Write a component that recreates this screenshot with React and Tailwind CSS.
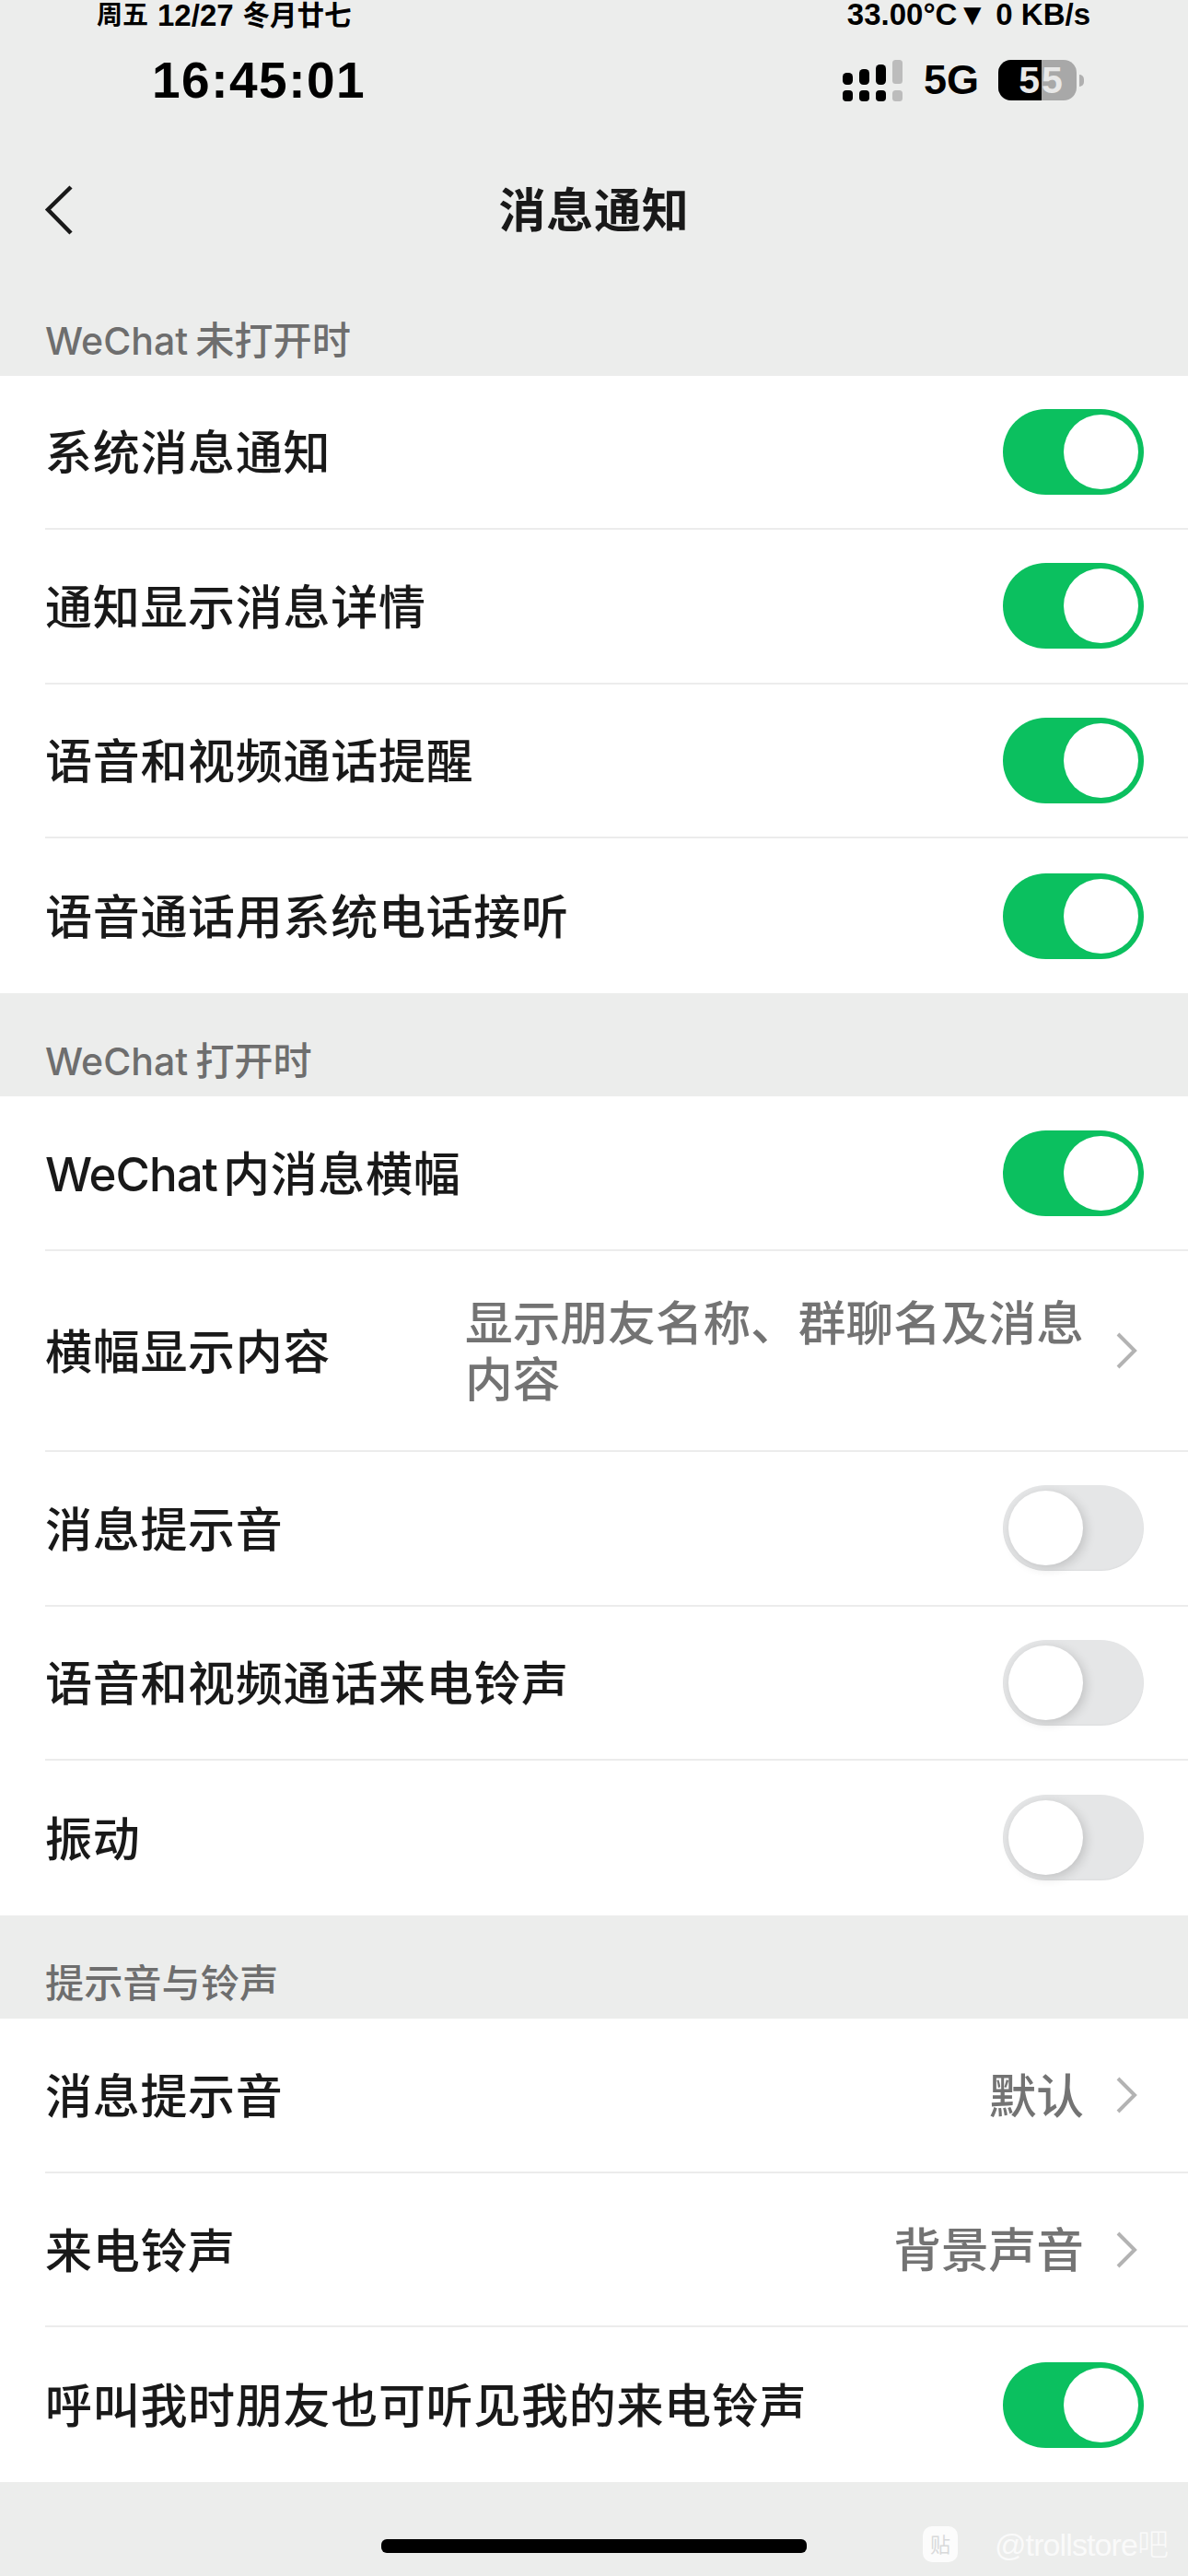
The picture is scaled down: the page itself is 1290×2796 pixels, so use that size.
function Toggle({ on }) {
  if (on) {
    return (
      <div className="flex h-[93px] w-[153px] shrink-0 items-center justify-end rounded-full bg-[#0bc05f] pr-[6px]">
        <div className="h-[81px] w-[81px] rounded-full bg-white" />
      </div>
    );
  }
  return (
    <div className="flex h-[93px] w-[153px] shrink-0 items-center rounded-full bg-[#e5e6e7] pl-[6px] shadow-[inset_0_-1px_2px_rgba(0,0,0,0.04)]">
      <div className="h-[81px] w-[81px] rounded-full bg-white shadow-[3px_3px_12px_rgba(0,0,0,0.16)]" />
    </div>
  );
}

function Chevron() {
  return (
    <svg width="24" height="40" viewBox="0 0 24 40" className="shrink-0" fill="none">
      <path d="M3 2 L21 20 L3 38" stroke="#b3b3b3" strokeWidth="4" />
    </svg>
  );
}

function Row({ label, latin, on, value, last, tall }) {
  return (
    <div className={tall ? "flex h-[218px] pl-[49px]" : "flex h-[167.6px] pl-[49px]"}>
      <div className={last ? "flex min-w-0 flex-1 items-center pr-[48px]" : "flex min-w-0 flex-1 items-center border-b-2 border-[#ececec] pr-[48px]"}>
        <span className="shrink-0 pt-[3px] text-[51px] font-medium leading-none tracking-[0.7px] text-[#191919]">
          {latin ? <span className="mr-[6px] tracking-[-1px]">{latin}</span> : null}
          {label}
        </span>
        <div className="flex-1" />
        {value ? (
          <div className="flex items-center pr-[7px]">
            <span className={tall ? "w-[680px] pt-[2px] text-[51.7px] leading-[61px] font-medium text-[#737373]" : "pt-[3px] text-[51.7px] leading-none font-medium text-[#737373]"}>{value}</span>
            <div className={tall ? "ml-[26px]" : "ml-[34px]"}><Chevron /></div>
          </div>
        ) : (
          <Toggle on={on} />
        )}
      </div>
    </div>
  );
}

function SectionHeader({ latin, children }) {
  return (
    <div className="flex h-[112.5px] items-end pb-[15px] pl-[49px] text-[42.2px] font-medium leading-[46px] text-[#6e6e6e]">
      {latin ? <span className="mr-[8px] text-[41px]">{latin}</span> : null}
      <span>{children}</span>
    </div>
  );
}

function Signal() {
  return (
    <svg width="65" height="45" viewBox="0 0 65 45" fill="none">
      <g fill="#000">
        <rect x="0" y="14" width="11" height="13" rx="4.5" />
        <rect x="18" y="10" width="11" height="17" rx="4.5" />
        <rect x="36" y="5" width="11" height="22" rx="4.5" />
        <rect x="0" y="33" width="11" height="12" rx="4" />
        <rect x="18" y="33" width="11" height="12" rx="4" />
        <rect x="36" y="33" width="11" height="12" rx="4" />
      </g>
      <rect x="54" y="0" width="11" height="26" rx="3.5" fill="#bcbcbc" />
      <rect x="54" y="33" width="11" height="12" rx="3.5" fill="#bcbcbc" />
    </svg>
  );
}

function Battery() {
  return (
    <div className="flex items-center">
      <div className="relative flex h-[44px] w-[85px] overflow-hidden rounded-[14px] bg-[#a8a8a8]">
        <div className="h-full w-[47px] bg-black" />
        <div className="absolute inset-0 flex items-center justify-center pl-[9px] text-[41px] font-bold leading-none tracking-[2px] text-[#e8e8e8]">
          55
        </div>
      </div>
      <div className="ml-[3px] h-[13px] w-[5px] rounded-r-full bg-[#b0b0b0]" />
    </div>
  );
}

function StatusBar() {
  return (
    <div className="flex h-[113px] justify-between text-black [font-family:'Liberation_Sans','Noto_Sans_CJK_SC',sans-serif]">
      <div className="flex flex-col">
        <div className="ml-[105px] flex h-[34px] items-center font-bold whitespace-nowrap">
          <span className="text-[28px] leading-[34px]">周五</span>
          <span className="ml-[10px] text-[33px] leading-[34px]">12/27</span>
          <span className="ml-[10px] text-[29.5px] leading-[34px]">冬月廿七</span>
        </div>
        <div className="ml-[165px] mt-[26px] text-[55px] font-bold leading-[55px] tracking-[1.5px] whitespace-nowrap">16:45:01</div>
      </div>
      <div className="mr-[106px] flex flex-col">
        <div className="h-[32px] self-end text-[33px] font-bold leading-[32px] whitespace-nowrap">33.00°C▼ 0 KB/s</div>
        <div className="mr-[7px] mt-[32px] flex items-center self-end">
          <Signal />
          <span className="ml-[23px] text-[45px] font-bold leading-[46px]">5G</span>
          <div className="ml-[21px]"><Battery /></div>
        </div>
      </div>
    </div>
  );
}

function NavBar() {
  return (
    <div className="grid h-[182px] grid-cols-[1fr_auto_1fr] items-center pt-[48px]">
      <div className="pl-[47px]">
        <svg width="34" height="56" viewBox="0 0 34 56" fill="none" className="block">
          <path d="M30 3 L5 27.5 L30 53" stroke="#191919" strokeWidth="4.5" />
        </svg>
      </div>
      <span className="text-[51px] font-semibold leading-none tracking-[0.7px] text-[#191919]">消息通知</span>
      <div />
    </div>
  );
}

export default function App() {
  return (
    <div className="relative h-[2796px] w-[1290px] overflow-hidden bg-[#ecedec] [font-family:'Inter','Noto_Sans_CJK_SC',sans-serif]">
      <StatusBar />
      <NavBar />

      <SectionHeader latin="WeChat">未打开时</SectionHeader>
      <div className="bg-white">
        <Row label="系统消息通知" on />
        <Row label="通知显示消息详情" on />
        <Row label="语音和视频通话提醒" on />
        <Row label="语音通话用系统电话接听" on last />
      </div>

      <SectionHeader latin="WeChat">打开时</SectionHeader>
      <div className="bg-white">
        <Row latin="WeChat" label="内消息横幅" on />
        <Row label="横幅显示内容" value="显示朋友名称、群聊名及消息内容" tall />
        <Row label="消息提示音" />
        <Row label="语音和视频通话来电铃声" />
        <Row label="振动" last />
      </div>

      <SectionHeader>提示音与铃声</SectionHeader>
      <div className="bg-white">
        <Row label="消息提示音" value="默认" />
        <Row label="来电铃声" value="背景声音" />
        <Row label="呼叫我时朋友也可听见我的来电铃声" on last />
      </div>

      <div className="flex justify-center pt-[62px]">
        <div className="h-[15px] w-[462px] rounded-[6px] bg-black" />
      </div>

      <div className="absolute left-[1002px] top-[2742px] flex items-center">
        <div className="flex h-[39px] w-[38px] items-center justify-center rounded-[10px] bg-white/85 text-[22px] leading-none text-[#d8d9da]">贴</div>
        <span className="ml-[40px] text-[34px] font-light leading-none tracking-[-0.9px] text-white/75 [font-family:'Liberation_Sans','Noto_Sans_CJK_SC',sans-serif]">@trollstore吧</span>
      </div>
    </div>
  );
}
